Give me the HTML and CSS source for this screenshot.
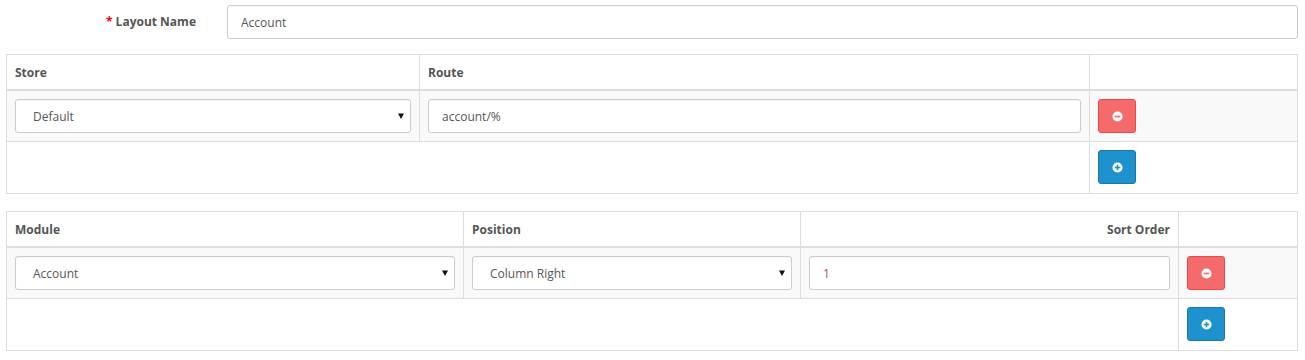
FILE: index.html
```html
<!DOCTYPE html>
<html>
<head>
<meta charset="utf-8">
<link rel="stylesheet" href="styles.css">
</head>
<body>
<div class="page">
  <div class="form-row">
    <label class="form-label"><span class="req">*</span> Layout Name</label>
    <input class="form-control" type="text" value="Account">
  </div>

  <table class="grid">
    <colgroup>
      <col class="c-store"><col class="c-route"><col>
    </colgroup>
    <thead>
      <tr><th>Store</th><th>Route</th><th></th></tr>
    </thead>
    <tbody>
      <tr>
        <td><select class="form-control sel"><option>Default</option></select></td>
        <td><input class="form-control" type="text" value="account/%"></td>
        <td><button class="btn btn-danger" type="button"><svg width="11" height="11" viewBox="0 0 12 12"><circle cx="6" cy="6" r="5.5" fill="#fff"/><rect x="3" y="5.1" width="6" height="1.8" fill="#f56b6b"/></svg></button></td>
      </tr>
    </tbody>
    <tfoot>
      <tr>
        <td colspan="2"></td>
        <td><button class="btn btn-primary" type="button"><svg width="11" height="11" viewBox="0 0 12 12"><circle cx="6" cy="6" r="5.5" fill="#fff"/><rect x="3" y="5.1" width="6" height="1.8" fill="#1e91cf"/><rect x="5.1" y="3" width="1.8" height="6" fill="#1e91cf"/></svg></button></td>
      </tr>
    </tfoot>
  </table>

  <table class="grid">
    <colgroup>
      <col class="c-module"><col class="c-position"><col class="c-sort"><col>
    </colgroup>
    <thead>
      <tr><th>Module</th><th>Position</th><th class="right">Sort Order</th><th></th></tr>
    </thead>
    <tbody>
      <tr>
        <td><select class="form-control sel"><option>Account</option></select></td>
        <td><select class="form-control sel"><option>Column Right</option></select></td>
        <td><input class="form-control num" type="text" value="1"></td>
        <td><button class="btn btn-danger" type="button"><svg width="11" height="11" viewBox="0 0 12 12"><circle cx="6" cy="6" r="5.5" fill="#fff"/><rect x="3" y="5.1" width="6" height="1.8" fill="#f56b6b"/></svg></button></td>
      </tr>
    </tbody>
    <tfoot>
      <tr>
        <td colspan="3"></td>
        <td><button class="btn btn-primary" type="button"><svg width="11" height="11" viewBox="0 0 12 12"><circle cx="6" cy="6" r="5.5" fill="#fff"/><rect x="3" y="5.1" width="6" height="1.8" fill="#1e91cf"/><rect x="5.1" y="3" width="1.8" height="6" fill="#1e91cf"/></svg></button></td>
      </tr>
    </tfoot>
  </table>
</div>
</body>
</html>
```

FILE: styles.css
```css
html, body {
  margin: 0;
  padding: 0;
  background: #fff;
}
body {
  font-family: "Open Sans", "Liberation Sans", sans-serif;
  font-size: 12px;
  line-height: 1.42857;
  color: #666;
}
.page {
  padding: 5px 7px 0 6px;
}
.form-row {
  display: flex;
  align-items: center;
  gap: 31px;
  margin-bottom: 15px;
}
.form-label {
  width: 190px;
  text-align: right;
  font-weight: bold;
  color: #555;
}
.req {
  color: #f00;
}
.form-control {
  display: block;
  box-sizing: border-box;
  width: 100%;
  height: 34px;
  padding: 0 13px;
  margin: 0;
  border: 1px solid #ccc;
  border-radius: 3px;
  background: #fff;
  font-family: "Open Sans", "Liberation Sans", sans-serif;
  font-size: 12px;
  color: #555;
  box-shadow: inset 0 1px 1px rgba(0,0,0,0.04);
}
.form-row .form-control {
  flex: 1;
}
.sel {
  -webkit-appearance: none;
  appearance: none;
  padding-left: 17px;
  background-image: url("data:image/svg+xml;utf8,<svg xmlns='http://www.w3.org/2000/svg' width='6' height='6' viewBox='0 0 6 6'><path d='M0 0.5h6L3 6z' fill='%23111'/></svg>");
  background-repeat: no-repeat;
  background-position: right 6px center;
}
.num {
  color: #b0514b;
}
.grid {
  width: 100%;
  border-collapse: collapse;
  table-layout: fixed;
  border: 1px solid #ddd;
  margin-bottom: 17px;
}
.grid th, .grid td {
  border: 1px solid #ddd;
  padding: 8px;
  text-align: left;
  vertical-align: middle;
}
.grid th {
  font-weight: bold;
  color: #555;
  border-bottom: 2px solid #ddd;
  padding-top: 9px;
}
.grid th.right {
  text-align: right;
}
.grid tbody tr {
  background: #f9f9f9;
}
.grid tfoot tr {
  background: #fff;
}
.grid tfoot td {
  padding-bottom: 9px;
}
.c-store { width: 413px; }
.c-route { width: 670px; }
.c-module { width: 457px; }
.c-position { width: 337px; }
.c-sort { width: 378px; }
.btn {
  display: flex;
  align-items: center;
  justify-content: center;
  box-sizing: border-box;
  width: 38px;
  height: 34px;
  padding: 0;
  border: 1px solid transparent;
  border-radius: 3px;
  cursor: pointer;
}
.btn-danger {
  background: #f56b6b;
  border-color: #f24545;
}
.btn-primary {
  background: #1e91cf;
  border-color: #1978ab;
}
```
